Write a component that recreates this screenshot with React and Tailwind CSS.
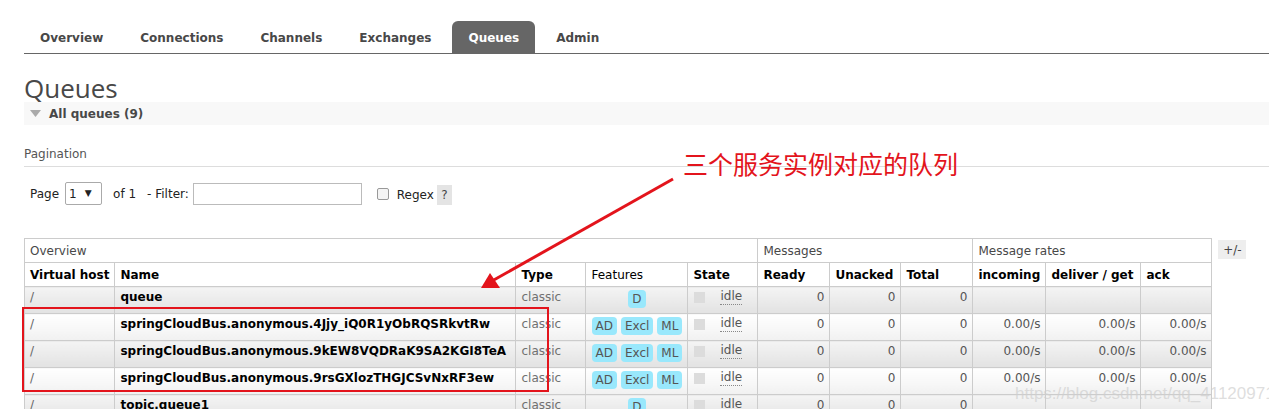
const tabs = ["Overview", "Connections", "Channels", "Exchanges", "Queues", "Admin"]

const rows = [
  { name: "queue", feats: ["D"], rates: false },
  { name: "springCloudBus.anonymous.4Jjy_iQ0R1yObRQSRkvtRw", feats: ["AD", "Excl", "ML"], rates: true },
  { name: "springCloudBus.anonymous.9kEW8VQDRaK9SA2KGI8TeA", feats: ["AD", "Excl", "ML"], rates: true },
  { name: "springCloudBus.anonymous.9rsGXlozTHGJCSvNxRF3ew", feats: ["AD", "Excl", "ML"], rates: true },
  { name: "topic.queue1", feats: ["D"], rates: false },
]

const cols = [90, 401, 70, 102, 70, 72, 71, 72, 73, 95, 71]

function Badge({ label }) {
  return (
    <span className="inline-block h-[18px] rounded-[4px] bg-[#99e8fc] px-[4px] leading-[18px] text-[#555]">
      {label}
    </span>
  )
}

function QueueRow({ row, index }) {
  var bg = index % 2 === 0
    ? "bg-linear-to-b from-[#f4f4f4] to-[#e2e2e2]"
    : "bg-linear-to-b from-white to-[#f1f1f1]"
  const td = "h-[27px] whitespace-nowrap border border-[#ccc] px-[5px] align-top pt-[1px] " + bg

  return (
    <tr>
      <td className={td + " text-[#666]"}>/</td>
      <td className={td + " font-bold text-black"}>{row.name}</td>
      <td className={td + " text-[#707070]"}>classic</td>
      <td className={td + " text-center"}>
        <div className="mt-[2px] flex justify-center gap-[4px]">
          {row.feats.map((f) => <Badge key={f} label={f} />)}
        </div>
      </td>
      <td className={td}>
        <div className="flex items-start">
          <span className="mt-[4px] ml-[1px] h-[11px] w-[11px] bg-[#dcdcdc]" />
          <span className="ml-[15px] mt-[1px] border-b border-dotted border-[#888] leading-[15px] text-[#555]">idle</span>
        </div>
      </td>
      <td className={td + " text-right text-[#555]"}>0</td>
      <td className={td + " text-right text-[#555]"}>0</td>
      <td className={td + " text-right text-[#555]"}>0</td>
      <td className={td + " text-right text-[#555]"}>{row.rates ? "0.00/s" : ""}</td>
      <td className={td + " text-right text-[#555]"}>{row.rates ? "0.00/s" : ""}</td>
      <td className={td + " text-right text-[#555]"}>{row.rates ? "0.00/s" : ""}</td>
    </tr>
  )
}

export default function App() {
  const th = "h-[24px] whitespace-nowrap border border-[#ccc] bg-white px-[5px] text-left align-middle"

  return (
    <div className="relative h-[409px] w-[1269px] overflow-hidden bg-white pl-[24px] pt-[21px] font-['DejaVu_Sans',sans-serif] text-[12px] text-[#484848]">
      {/* tabs */}
      <ul className="flex border-b border-[#666]">
        {tabs.map((t) => (
          <li
            key={t}
            className={
              "mr-[5px] h-[32px] rounded-t-[6px] px-[16px] pt-[8px] text-[12px] font-bold " +
              (t === "Queues" ? "bg-[#666] text-white" : "text-[#484848]")
            }>
            {t}
          </li>
        ))}
      </ul>

      <h1 className="mt-[20px] font-['Open_Sans',sans-serif] text-[26px] leading-[28px] text-[#484848]">
        Queues
      </h1>

      <div className="flex h-[23px] items-center bg-[#f8f8f8] pl-[6px]">
        <svg width="11" height="7" viewBox="0 0 11 7">
          <polygon points="0,0 11,0 5.5,7" fill="#aaa" />
        </svg>
        <span className="ml-[8px] font-bold text-[#484848]">All queues (9)</span>
      </div>

      <div className="mt-[20px] border-b border-[#ddd] pb-[3px] text-[#555]">Pagination</div>

      <div className="mt-[15px] flex items-center pl-[6px] text-[#222]">
        <span>Page</span>
        <div className="ml-[6px] flex h-[23px] w-[37px] items-center rounded-[2px] border border-[#aaa] px-[3px]">
          <span>1</span>
          <span className="ml-[8px] text-[9px]">▼</span>
        </div>
        <span className="ml-[11px]">of 1</span>
        <span className="ml-[11px]">- Filter:</span>
        <div className="ml-[4px] h-[22px] w-[169px] border border-[#bbb]" />
        <span className="ml-[15px] h-[12px] w-[12px] rounded-[2px] border border-[#999] bg-[#f4f4f4]" />
        <span className="ml-[8px] mt-[2px]">Regex</span>
        <span className="ml-[3px] mt-[2px] flex h-[20px] w-[15px] items-center justify-center bg-[#e4e4e4] text-[#444]">?</span>
      </div>

      {/* queues table */}
      <div className="mt-[33px] flex items-start">
        <table className="table-fixed border-collapse">
          <colgroup>
            {cols.map((w, i) => <col key={i} style={{ width: w }} />)}
          </colgroup>
          <thead>
            <tr>
              <th colSpan={5} className={th + " font-normal"}>Overview</th>
              <th colSpan={3} className={th + " font-normal"}>Messages</th>
              <th colSpan={3} className={th + " font-normal"}>Message rates</th>
            </tr>
            <tr className="font-bold text-black">
              <th className={th}>Virtual host</th>
              <th className={th}>Name</th>
              <th className={th}>Type</th>
              <th className={th + " font-normal"}>Features</th>
              <th className={th}>State</th>
              <th className={th}>Ready</th>
              <th className={th}>Unacked</th>
              <th className={th}>Total</th>
              <th className={th}>incoming</th>
              <th className={th}>deliver / get</th>
              <th className={th}>ack</th>
            </tr>
          </thead>
          <tbody>
            {rows.map((r, i) => <QueueRow key={r.name} row={r} index={i} />)}
          </tbody>
        </table>
        <span className="ml-[6px] mt-[2px] flex h-[19px] w-[28px] items-center justify-center bg-[#eee] text-[#444]">+/-</span>
      </div>

      {/* annotation overlay */}
      <div className="absolute left-[22px] top-[307px] h-[85px] w-[527px] border-2 border-[#e3141c]" />
      <svg className="pointer-events-none absolute left-0 top-0" width="1269" height="409">
        <line x1="673" y1="179" x2="492" y2="281" stroke="#e3141c" strokeWidth="3" />
        <polygon points="481,288 490,273 500,288" fill="#e3141c" />
      </svg>
      <div className="absolute left-[683px] top-[146px] font-['Noto_Sans_CJK_SC',sans-serif] text-[25px] leading-[34px] text-[#e3141c]">
        三个服务实例对应的队列
      </div>
      <div className="pointer-events-none absolute left-[1015px] top-[381px] font-['Liberation_Sans',sans-serif] text-[17px] text-[#cfcfcf]/70">
        https://blog.csdn.net/qq_41120971
      </div>
    </div>
  )
}
